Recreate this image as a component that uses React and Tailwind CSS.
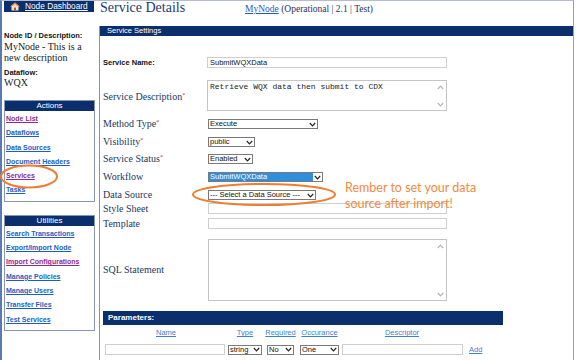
import React from 'react'

const sans = { fontFamily: '"Liberation Sans", Arial, sans-serif' }
const serif = { fontFamily: '"Liberation Serif", "Times New Roman", serif' }
const mono = { fontFamily: '"Liberation Mono", "Courier New", monospace' }

function Chevron({ color = '#222' }) {
  return (
    <svg width="7" height="5" viewBox="0 0 7 5" className="shrink-0">
      <path d="M0.8 1 L3.5 3.8 L6.2 1" stroke={color} strokeWidth="1.2" fill="none" />
    </svg>
  )
}

function Select({ className, value, highlight }) {
  return (
    <div className={`flex h-[10px] items-stretch border border-[#7a7a7a] bg-white ${className}`} style={sans}>
      <div
        className={`flex flex-1 items-center overflow-hidden whitespace-nowrap pl-[1px] text-[7.5px] leading-none ${
          highlight ? 'bg-[#2f8fdc] text-white' : 'text-[#111]'
        }`}
      >
        {value}
      </div>
      <div className="flex w-[9px] items-center justify-center">
        <Chevron />
      </div>
    </div>
  )
}

function TextBox({ className, children }) {
  return (
    <div
      className={`flex items-center border border-[#cfcfcf] bg-white pl-[2px] text-[7.5px] leading-none text-[#111] ${className}`}
      style={sans}
    >
      {children}
    </div>
  )
}

function TextArea({ className, children }) {
  return (
    <div className={`relative border border-[#c4c4c4] bg-white ${className}`}>
      <div className="pl-[2px] pt-[2px] text-[8px] leading-none text-[#222]" style={mono}>
        {children}
      </div>
      <div className="absolute right-[2px] top-[4px] rotate-180">
        <Chevron color="#b5b5b5" />
      </div>
      <div className="absolute bottom-[3px] right-[2px]">
        <Chevron color="#b5b5b5" />
      </div>
    </div>
  )
}

function Label({ children, req }) {
  return (
    <div className="w-[105px] shrink-0 text-[10px] leading-none text-[#22375f]" style={serif}>
      {children}
      {req && <span className="relative top-[-3px] text-[6px] text-[#d0202a]">*</span>}
    </div>
  )
}

function Row({ className, children }) {
  return <div className={`flex items-center pl-[3px] ${className}`}>{children}</div>
}

function SideLink({ children, visited }) {
  return (
    <div
      className={`h-[14.3px] pl-[1px] text-[7px] font-bold leading-[14.3px] underline ${
        visited ? 'text-[#8f2a92]' : 'text-[#1c5ec6]'
      }`}
      style={sans}
    >
      {children}
    </div>
  )
}

function SideBox({ title, links, className }) {
  return (
    <div className={`w-[91px] border border-[#8797b3] pb-[3px] ${className}`}>
      <div className="h-[10px] bg-[#0b2e6d] text-center text-[8px] leading-[10px] text-white" style={sans}>
        {title}
      </div>
      <div className="pt-[1px]">
        {links.map((l) => (
          <SideLink key={l.name} visited={l.visited}>
            {l.name}
          </SideLink>
        ))}
      </div>
    </div>
  )
}

function House() {
  return (
    <svg width="10" height="9" viewBox="0 0 10 9">
      <path d="M5 0.5 L0.3 4.6 L1.5 4.6 L1.5 8.5 L8.5 8.5 L8.5 4.6 L9.7 4.6 Z" fill="#f4e3c6" />
      <path d="M5 0.5 L0.3 4.6 L1.8 4.6 L5 1.9 L8.2 4.6 L9.7 4.6 Z" fill="#e07a38" />
      <rect x="4" y="5.6" width="2" height="2.9" fill="#b0582a" />
    </svg>
  )
}

const actions = [
  { name: 'Node List', visited: true },
  { name: 'Dataflows' },
  { name: 'Data Sources' },
  { name: 'Document Headers' },
  { name: 'Services', visited: true },
  { name: 'Tasks' },
]

const utilities = [
  { name: 'Search Transactions' },
  { name: 'Export/Import Node' },
  { name: 'Import Configurations', visited: true },
  { name: 'Manage Policies' },
  { name: 'Manage Users' },
  { name: 'Transfer Files' },
  { name: 'Test Services' },
]

export default function App() {
  return (
    <div className="relative h-[360px] w-[576px] overflow-hidden bg-white">
      <div className="flex h-full w-[574px] flex-col border-l-2 border-r border-t border-l-[#5a7bb0] border-r-[#8aa0bf] border-t-[#b4bccb]">
        {/* top strip */}
        <div className="flex h-[25px] shrink-0">
          <div className="w-[97px] shrink-0 pl-[2px]">
            <div className="flex h-[11px] w-[90px] items-center gap-[5px] bg-[#0b2e6d] pl-[6px]">
              <House />
              <span className="text-[8.3px] leading-none text-white underline" style={sans}>
                Node Dashboard
              </span>
            </div>
          </div>
          <div className="w-[146px] shrink-0 pl-[1px] text-[14px] leading-[13px] text-[#1e3a6e]" style={serif}>
            Service Details
          </div>
          <div className="pt-[4px] text-[9.5px] leading-[9px] text-[#1e3466]" style={serif}>
            <span className="text-[#1d5dc0] underline">MyNode</span> (Operational | 2.1 | Test)
          </div>
        </div>

        <div className="flex flex-1">
          {/* sidebar */}
          <div className="w-[97px] shrink-0 pl-[2px]">
            <div className="mt-[5px] h-[10px] text-[7.5px] font-bold leading-[10px] text-[#111]" style={sans}>
              Node ID / Description:
            </div>
            <div className="text-[10px] leading-[11px] text-[#1a1a22]" style={serif}>
              MyNode - This is a
              <br />
              new description
            </div>
            <div className="mt-[5px] h-[10px] text-[7.5px] font-bold leading-[10px] text-[#111]" style={sans}>
              Dataflow:
            </div>
            <div className="h-[10px] text-[10px] leading-[10px] text-[#1a1a22]" style={serif}>
              WQX
            </div>
            <SideBox className="mt-[12px]" title="Actions" links={actions} />
            <SideBox className="mt-[13px]" title="Utilities" links={utilities} />
          </div>

          {/* main panel */}
          <div className="flex-1 border-l border-[#7f93b3]">
            <div className="h-[10px] bg-[#0b2e6d] pl-[7px] text-[7.5px] leading-[10px] text-white" style={sans}>
              Service Settings
            </div>

            <Row className="mt-[21px] h-[11px]">
              <div className="w-[104px] shrink-0 text-[7.5px] font-bold text-[#111]" style={sans}>
                Service Name:
              </div>
              <TextBox className="h-[11px] w-[240px]">SubmitWQXData</TextBox>
            </Row>

            <Row className="mt-[12px] h-[31px]">
              <div className="w-[104px] shrink-0 pt-[2px]">
                <Label req>Service Description</Label>
              </div>
              <TextArea className="h-[31px] w-[240px]">Retrieve WQX data then submit to CDX</TextArea>
            </Row>

            <Row className="mt-[8px] h-[10px]">
              <Label req>Method Type</Label>
              <Select className="w-[110px]" value="Execute" />
            </Row>
            <Row className="mt-[8px] h-[10px]">
              <Label req>Visibility</Label>
              <Select className="w-[47px]" value="public" />
            </Row>
            <Row className="mt-[7px] h-[10px]">
              <Label req>Service Status</Label>
              <Select className="w-[45px]" value="Enabled" />
            </Row>
            <Row className="mt-[8px] h-[10px]">
              <Label>Workflow</Label>
              <Select className="w-[115px]" value="SubmitWQXData" highlight />
            </Row>
            <Row className="mt-[8px] h-[10px]">
              <Label>Data Source</Label>
              <Select className="w-[108px]" value="--- Select a Data Source ---" />
            </Row>
            <Row className="mt-[3px] h-[11px]">
              <Label>Style Sheet</Label>
              <TextBox className="h-[11px] w-[239px]" />
            </Row>
            <Row className="mt-[4px] h-[11px]">
              <Label>Template</Label>
              <TextBox className="h-[11px] w-[239px]" />
            </Row>
            <Row className="mt-[10px] h-[62px]">
              <Label>SQL Statement</Label>
              <TextArea className="h-[62px] w-[239px]" />
            </Row>

            <div
              className="ml-[3px] mt-[10px] h-[14px] w-[400px] bg-[#0b2e6d] pl-[5px] text-[8px] font-bold leading-[14px] text-white"
              style={sans}
            >
              Parameters:
            </div>

            <div className="ml-[5px] flex text-[7.5px] leading-none text-[#3f7fd2] underline" style={sans}>
              {[
                ['Name', 'w-[122px]'],
                ['Type', 'w-[36px]'],
                ['Required', 'w-[35px]'],
                ['Occurance', 'w-[43px]'],
                ['Descriptor', 'w-[122px]'],
              ].map(([t, w]) => (
                <div key={t} className={`flex h-[16px] items-center justify-center ${w}`}>
                  {t}
                </div>
              ))}
            </div>
            <div className="ml-[5px] mt-[3px] flex items-center">
              <div className="w-[122px]">
                <TextBox className="h-[11px] w-[120px]" />
              </div>
              <div className="flex w-[36px] justify-center">
                <Select className="w-[34px]" value="string" />
              </div>
              <div className="flex w-[35px] justify-center">
                <Select className="w-[27px]" value="No" />
              </div>
              <div className="flex w-[43px] justify-center">
                <Select className="w-[39px]" value="One" />
              </div>
              <div className="flex w-[122px] justify-center">
                <TextBox className="h-[11px] w-[121px]" />
              </div>
              <span className="ml-[6px] text-[7.5px] text-[#3f7fd2] underline" style={sans}>
                Add
              </span>
            </div>
          </div>
        </div>
      </div>

      {/* annotations */}
      <svg className="absolute left-0 top-[164px]" width="60" height="26" viewBox="0 0 60 26">
        <ellipse cx="29" cy="12.5" rx="28" ry="11" fill="none" stroke="#ee7d31" strokeWidth="2" />
      </svg>
      <svg className="absolute left-[191px] top-[182px]" width="146" height="25" viewBox="0 0 146 25">
        <ellipse cx="73" cy="12.5" rx="71" ry="10.5" fill="none" stroke="#ee7d31" strokeWidth="2" />
      </svg>
      <div
        className="absolute left-[345px] top-[180px] text-[12.5px] leading-[16px] text-[#ef8a3e]"
        style={{ fontFamily: 'Lato, "Open Sans", sans-serif' }}
      >
        Rember to set your data
        <br />
        source after import!
      </div>
    </div>
  )
}
